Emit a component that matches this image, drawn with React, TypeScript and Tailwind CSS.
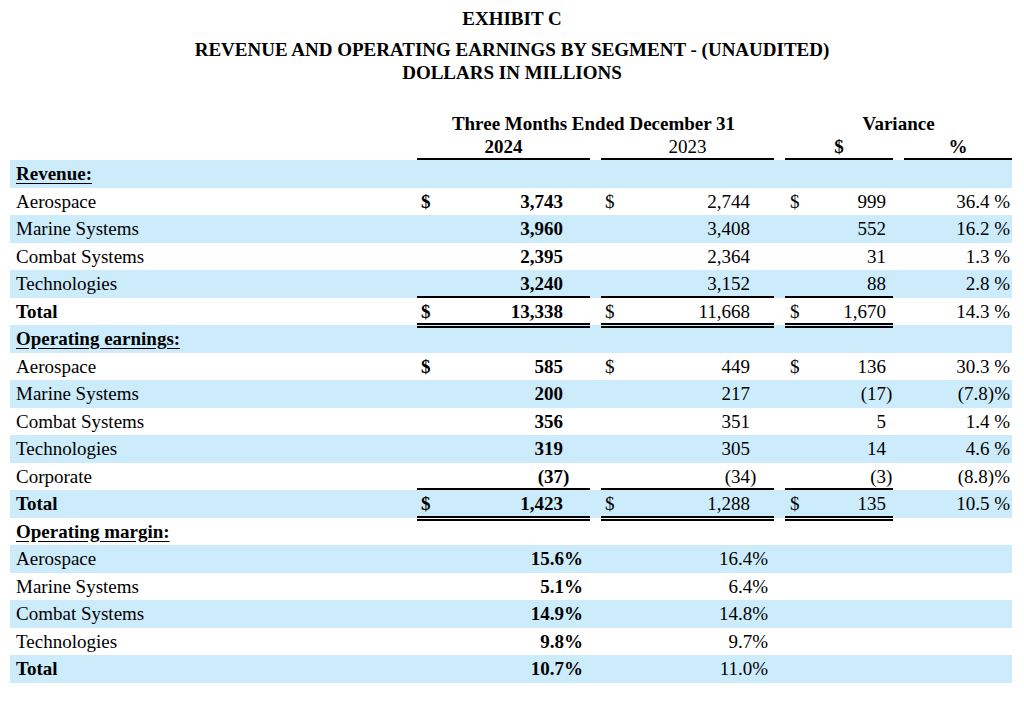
import React from 'react';

type Line = 'single' | 'double' | undefined;

type Row = {
  label: string;
  head?: boolean;
  total?: boolean;
  margin?: boolean;
  a?: [string, string];
  b?: [string, string];
  c?: [string, string];
  d?: string;
  line?: Line;
};

const rows: Row[] = [
  { label: 'Revenue:', head: true },
  { label: 'Aerospace', a: ['$', '3,743'], b: ['$', '2,744'], c: ['$', '999'], d: '36.4 %' },
  { label: 'Marine Systems', a: ['', '3,960'], b: ['', '3,408'], c: ['', '552'], d: '16.2 %' },
  { label: 'Combat Systems', a: ['', '2,395'], b: ['', '2,364'], c: ['', '31'], d: '1.3 %' },
  { label: 'Technologies', a: ['', '3,240'], b: ['', '3,152'], c: ['', '88'], d: '2.8 %', line: 'single' },
  { label: 'Total', total: true, a: ['$', '13,338'], b: ['$', '11,668'], c: ['$', '1,670'], d: '14.3 %', line: 'double' },
  { label: 'Operating earnings:', head: true },
  { label: 'Aerospace', a: ['$', '585'], b: ['$', '449'], c: ['$', '136'], d: '30.3 %' },
  { label: 'Marine Systems', a: ['', '200'], b: ['', '217'], c: ['', '(17)'], d: '(7.8)%' },
  { label: 'Combat Systems', a: ['', '356'], b: ['', '351'], c: ['', '5'], d: '1.4 %' },
  { label: 'Technologies', a: ['', '319'], b: ['', '305'], c: ['', '14'], d: '4.6 %' },
  { label: 'Corporate', a: ['', '(37)'], b: ['', '(34)'], c: ['', '(3)'], d: '(8.8)%', line: 'single' },
  { label: 'Total', total: true, a: ['$', '1,423'], b: ['$', '1,288'], c: ['$', '135'], d: '10.5 %', line: 'double' },
  { label: 'Operating margin:', head: true },
  { label: 'Aerospace', margin: true, a: ['', '15.6%'], b: ['', '16.4%'] },
  { label: 'Marine Systems', margin: true, a: ['', '5.1%'], b: ['', '6.4%'] },
  { label: 'Combat Systems', margin: true, a: ['', '14.9%'], b: ['', '14.8%'] },
  { label: 'Technologies', margin: true, a: ['', '9.8%'], b: ['', '9.7%'] },
  { label: 'Total', total: true, margin: true, a: ['', '10.7%'], b: ['', '11.0%'] },
];

// the double rule straddles the row boundary, so that cell runs a little taller and sits above the next row
const lineClass = (line: Line) =>
  line === 'single'
    ? 'h-[27.5px] border-b-2 border-black'
    : line === 'double'
      ? 'h-[30.5px] relative z-10 border-b-[5px] border-double border-black'
      : 'h-[27.5px]';

// dollar sign on the left, number right-aligned, closing paren hangs past the figures
function Money({ v, padL, padR, line }: { v?: [string, string]; padL: string; padR: string; line: Line }) {
  if (!v) return <div className={lineClass(line)} />;
  const [dollar, num] = v;
  const neg = num.endsWith(')');
  const main = neg ? num.slice(0, -1) : num;
  return (
    <div className={`flex leading-[27.5px] ${lineClass(line)}`}>
      <span className={padL}>{dollar}</span>
      <span className="flex-1 text-right">{main}</span>
      <span className="w-[7px]">{neg ? ')' : ''}</span>
      <span className={padR} />
    </div>
  );
}

export default function App() {
  return (
    <div className="w-[1024px] h-[708px] bg-white text-black font-['Liberation_Serif',serif] text-[19px] overflow-hidden">
      <div className="pt-[7px] text-center font-bold leading-[23px]">
        <div>EXHIBIT C</div>
        <div className="mt-[8px]">REVENUE AND OPERATING EARNINGS BY SEGMENT - (UNAUDITED)</div>
        <div>DOLLARS IN MILLIONS</div>
      </div>

      <div className="ml-[10px] w-[1002px] mt-[28px]">
        {/* column headers */}
        <div className="grid grid-cols-[407px_357px_11px_227px] font-bold leading-[23px]">
          <div />
          <div className="text-center pr-[4px]">Three Months Ended December 31</div>
          <div />
          <div className="text-center">Variance</div>
        </div>
        <div className="grid grid-cols-[407px_173px_11px_173px_11px_108px_11px_108px] leading-[23px]">
          <div />
          <div className="h-[25px] border-b-2 border-black text-center font-bold">2024</div>
          <div />
          <div className="h-[25px] border-b-2 border-black text-center">2023</div>
          <div />
          <div className="h-[25px] border-b-2 border-black text-center font-bold">$</div>
          <div />
          <div className="h-[25px] border-b-2 border-black text-center font-bold">%</div>
        </div>

        {rows.map((r, i) => (
          <div
            key={i}
            className={`grid grid-cols-[407px_173px_11px_173px_11px_108px_11px_108px] h-[27.5px] leading-[27.5px] ${i % 2 === 0 ? 'bg-[#ccecfc]' : 'bg-white'}`}
          >
            <div className={`pl-[6px] ${r.head || r.total ? 'font-bold' : ''} ${r.head ? 'underline underline-offset-[3px]' : ''}`}>
              {r.label}
            </div>
            {r.head ? (
              <>
                <div /><div /><div /><div /><div /><div /><div />
              </>
            ) : r.margin ? (
              <>
                <div className="text-right pr-[7px] font-bold">{r.a?.[1]}</div>
                <div />
                <div className="text-right pr-[6px]">{r.b?.[1]}</div>
                <div /><div /><div /><div />
              </>
            ) : (
              <>
                <div className="font-bold">
                  <Money v={r.a} padL="w-[26px] pl-[4px]" padR="w-[20px]" line={r.line} />
                </div>
                <div />
                <Money v={r.b} padL="w-[26px] pl-[4px]" padR="w-[17px]" line={r.line} />
                <div />
                <Money v={r.c} padL="w-[26px] pl-[5px]" padR="w-0" line={r.line} />
                <div />
                <div className="text-right pr-[2px]">{r.d}</div>
              </>
            )}
          </div>
        ))}
      </div>
    </div>
  );
}
